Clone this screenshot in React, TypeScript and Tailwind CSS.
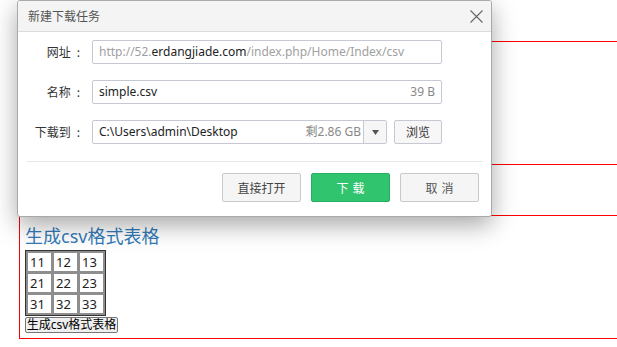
import React from 'react';

const font = "font-['Noto_Sans','Noto_Sans_CJK_SC',sans-serif]";
const cjk = "font-['Noto_Sans_CJK_SC',sans-serif]";

function CsvBox() {
  const rows = [
    ['11', '12', '13'],
    ['21', '22', '23'],
    ['31', '32', '33'],
  ];
  return (
    <div className="mt-[50px] w-[660px] ml-[19px] border border-[#ff0000] pl-[5px] pt-[8px] pb-[5px]">
      <h3 className="text-[18px] leading-[24px] text-[#337ab7]">生成csv格式表格</h3>
      <table className="mt-[2px] border border-[#333] bg-[#8e8e8e] border-separate border-spacing-[1px]">
        <tbody>
          {rows.map((r, i) => (
            <tr key={i}>
              {r.map(c => (
                <td
                  key={c}
                  className="box-border w-[25px] h-[20px] border border-[#8e8e8e] bg-white px-[2px] py-0 text-[13px] leading-[18px] text-[#222]"
                >
                  {c}
                </td>
              ))}
            </tr>
          ))}
        </tbody>
      </table>
      <button
        type="button"
        className="mt-[1px] block h-[16px] w-[93px] border border-[#767676] rounded-[2px] bg-[#efefef] text-[12px] leading-[14px] text-black"
      >
        生成csv格式表格
      </button>
    </div>
  );
}

function Label({ text }: { text: string }) {
  return (
    <div className={`${cjk} flex w-[69px] justify-end text-[#333]`}>
      <span>{text}</span>
      <span className="ml-[6px] mr-[7px]">:</span>
    </div>
  );
}

export default function App() {
  return (
    <div className={`relative w-[617px] h-[347px] overflow-hidden bg-white ${font}`}>
      {/* page behind the dialog: first box is covered, second shows */}
      <div className="pt-[41px]">
        <div className="h-[124px] w-[660px] ml-[19px] border border-[#ff0000]" />
        <CsvBox />
      </div>

      {/* download dialog */}
      <div className="absolute left-[17px] top-0 w-[475px] h-[217px] border border-[#a9a9a9] rounded-[3px] bg-white shadow-[0_8px_24px_rgba(0,0,0,0.35)] overflow-hidden">
        <div className="flex items-center justify-between h-[31px] bg-[#f4f4f4] border-b border-[#dcdcdc] pl-[10px] pr-[8px]">
          <span className={`${cjk} text-[12px] text-[#555]`}>新建下载任务</span>
          <svg width="13" height="13" viewBox="0 0 13 13" className="mt-[1px]">
            <path d="M0.5 0.5 L12.5 12.5 M12.5 0.5 L0.5 12.5" stroke="#666" strokeWidth="1.1" fill="none" />
          </svg>
        </div>

        <div className="flex flex-col gap-[16px] pt-[8px] text-[12px]">
          <div className="flex items-center">
            <Label text="网址" />
            <div className="ml-[5px] flex items-center h-[24px] w-[350px] border border-[#c6c9d4] rounded-[2px] px-[6px] text-[#a0a0a0] whitespace-nowrap overflow-hidden">
              http://52.<span className="text-[#222]">erdangjiade.com</span>/index.php/Home/Index/csv
            </div>
          </div>
          <div className="flex items-center">
            <Label text="名称" />
            <div className="ml-[5px] flex items-center justify-between h-[24px] w-[350px] border border-[#c6c9d4] rounded-[2px] px-[6px]">
              <span className="text-[#222]">simple.csv</span>
              <span className="text-[#888]">39 B</span>
            </div>
          </div>
          <div className="flex items-center">
            <Label text="下载到" />
            <div className="ml-[5px] flex h-[24px] w-[295px] border border-[#c6c9d4] rounded-[2px]">
              <div className="flex flex-1 items-center justify-between pl-[6px] pr-[2px]">
                <span className="text-[#222]">C:\Users\admin\Desktop</span>
                <span className="text-[#888]">剩2.86 GB</span>
              </div>
              <div className="flex w-[23px] items-center justify-center border-l border-[#c6c9d4] bg-[#f6f6f6]">
                <svg width="7" height="5" viewBox="0 0 7 5">
                  <path d="M0 0 H7 L3.5 5 Z" fill="#555" />
                </svg>
              </div>
            </div>
            <button
              type="button"
              className={`${cjk} ml-[7px] h-[24px] w-[48px] border border-[#c6c9d4] rounded-[2px] bg-[#f7f7f7] text-[12px] text-[#333]`}
            >
              浏览
            </button>
          </div>
        </div>

        <div className="mt-[17px] ml-[9px] mr-[8px] border-t border-[#e6e6e6]" />

        <div className={`${cjk} flex justify-end gap-[10px] pt-[11px] pr-[12px] text-[12px]`}>
          <button type="button" className="h-[29px] w-[79px] border border-[#c9c9c9] rounded-[2px] bg-[#f5f5f5] text-[#444]">
            直接打开
          </button>
          <button type="button" className="h-[29px] w-[79px] border border-[#28b062] rounded-[2px] bg-[#31c46e] text-white tracking-[4px] pl-[4px]">
            下载
          </button>
          <button type="button" className="h-[29px] w-[79px] border border-[#c9c9c9] rounded-[2px] bg-[#f5f5f5] text-[#555] tracking-[4px] pl-[4px]">
            取消
          </button>
        </div>
      </div>
    </div>
  );
}
